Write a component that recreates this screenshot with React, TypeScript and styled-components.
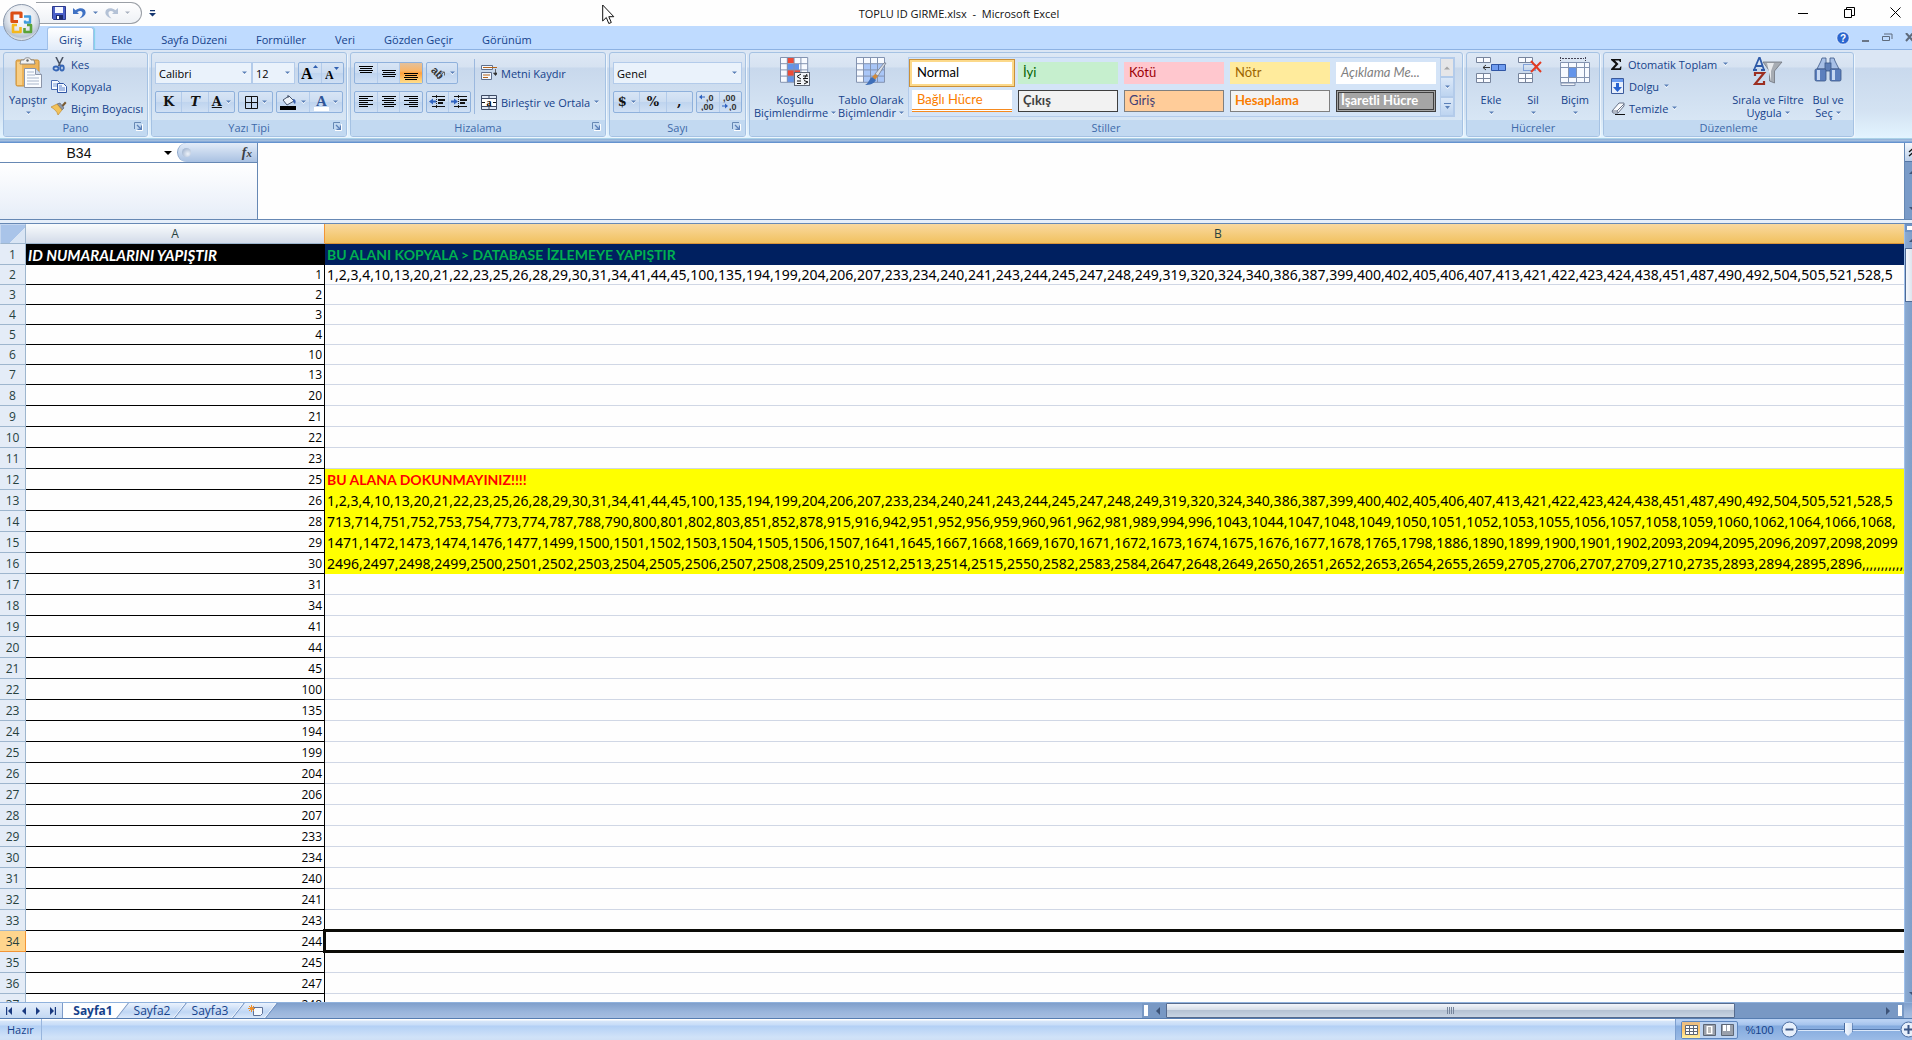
import React from "react";
import styled, { createGlobalStyle, css } from "styled-components";

const ui = `"Open Sans", "Noto Sans", sans-serif`;
const calibri = `Lato, "Open Sans", sans-serif`;
const ink = "#15428b";

const GlobalStyle = createGlobalStyle`
  *, *::before, *::after { box-sizing: border-box; }
  html, body, #root { height: 100%; }
  body { margin: 0; overflow: hidden; font-family: ${ui}; font-size: 11px; color: ${ink}; }
  button, input, select, textarea { font: inherit; color: inherit; margin: 0; padding: 0; border: 0; background: none; border-radius: 0; outline: none; }
  svg { display: block; flex: none; }
`;

const Viewport = styled.div`
  position: relative;
  height: 100vh;
  overflow: hidden;
`;

/* The maximised window runs a little past the right screen edge. */
const Shell = styled.div`
  width: calc(100% + 8px);
  height: 100%;
  display: flex;
  flex-direction: column;
  background: #fefefe;
`;

/* ---------- title bar ---------- */

const TitleBar = styled.header`
  flex: none;
  height: 26px;
  display: grid;
  grid-template-columns: 1fr auto 1fr;
  align-items: start;
  padding-right: 2px;
`;

const QuickAccess = styled.div`
  display: flex;
  align-items: center;
  gap: 7px;
  padding: 2px 0 0 36px;
`;

const QuickPill = styled.div`
  display: flex;
  align-items: center;
  width: 106px;
  height: 22px;
  padding: 0 10px 0 16px;
  gap: 7px;
  border: 1px solid #9a9fa6;
  border-left: 0;
  border-radius: 0 11px 11px 0;
  background: linear-gradient(#ffffff, #eef1f5);
`;

const IconButton = styled.button`
  display: flex;
  align-items: center;
  justify-content: center;
`;

const Title = styled.h1`
  margin: 0;
  font: 400 11px/28px ${ui};
  color: #111;
  white-space: pre;
`;

const Caption = styled.div`
  display: flex;
  justify-content: flex-end;
`;

const CaptionButton = styled(IconButton)`
  width: 46px;
  height: 25px;
`;

const Orb = styled.button`
  position: absolute;
  left: 2px;
  top: 3px;
  z-index: 2;
`;

const Pointer = styled.div`
  position: absolute;
  left: 602px;
  top: 4px;
  z-index: 3;
  pointer-events: none;
`;

/* ---------- ribbon ---------- */

const TabBar = styled.nav`
  flex: none;
  display: flex;
  align-items: flex-end;
  height: 24px;
  padding: 0 5px 0 47px;
  background: #bfdbff;
  border-bottom: 1px solid #8db2e3;
`;

const RibbonTab = styled.button<{ $active?: boolean }>`
  height: 23px;
  padding: 0 11px;
  margin: 0 5px -1px 0;
  line-height: 24px;
  border: 1px solid transparent;
  border-bottom: 0;
  ${(p) =>
    p.$active &&
    css`
      background: linear-gradient(#ffffff, #e1ebf8);
      border-color: #9fc0ea;
      border-radius: 3px 3px 0 0;
      box-shadow: 1px 0 1px #7fd3e8;
    `}
`;

const DocButtons = styled.div`
  margin-left: auto;
  align-self: center;
  display: flex;
  align-items: center;
  gap: 11px;
`;

const Ribbon = styled.div`
  flex: none;
  display: flex;
  gap: 3px;
  height: 93px;
  padding: 2px 3px 6px;
  background: linear-gradient(#dbe6f4 0, #dbe6f4 17px, #c9d9ed 18px, #d3e2f2 60px, #e3f4ff 88px, #c5f3f7 88px, #8fb0d8 89px, #a9c2e0 91px, #6593cf 92px);
`;

const Group = styled.section<{ $w: number }>`
  flex: none;
  width: ${(p) => p.$w}px;
  display: flex;
  flex-direction: column;
  border: 1px solid #a5c2e3;
  border-radius: 3px;
  overflow: hidden;
  background: linear-gradient(#dde8f5 0, #d6e2f1 14px, #c8d8ec 15px, #dceaf7 100%);
  box-shadow: 1px 1px 0 #eef6fd;
`;

const GroupBody = styled.div`
  flex: 1;
  display: flex;
  padding: 0 3px;
`;

const GroupLabel = styled.div`
  position: relative;
  height: 16px;
  line-height: 16px;
  text-align: center;
  color: #3e6aaa;
  background: #c2d9f1;
`;

const Launcher = styled.button`
  position: absolute;
  right: 4px;
  top: 2px;
`;

const Stack = styled.div<{ $ml?: number }>`
  display: flex;
  flex-direction: column;
  margin-left: ${(p) => p.$ml ?? 0}px;
`;

const Tools = styled.div`
  display: flex;
  flex-direction: column;
  gap: 7px;
  padding-top: 9px;
`;

const ToolRow = styled.div`
  display: flex;
  gap: 3px;
  height: 22px;
`;

const ComboPair = styled.div`
  display: flex;
`;

const SmallButton = styled.button<{ $gap?: number }>`
  display: flex;
  align-items: center;
  gap: ${(p) => p.$gap ?? 4}px;
  height: 22px;
  white-space: nowrap;
`;

const BigButton = styled.button<{ $w: number }>`
  width: ${(p) => p.$w}px;
  height: 66px;
  display: flex;
  flex-direction: column;
  align-items: center;
  padding-top: 4px;
  line-height: 13px;
  white-space: nowrap;
`;

const BigIcon = styled.span`
  height: 36px;
`;

const Line = styled.span`
  display: flex;
  align-items: center;
  justify-content: center;
  gap: 3px;
  height: 13px;
`;

const ButtonSet = styled.div<{ $w?: number }>`
  display: flex;
  width: ${(p) => (p.$w ? `${p.$w}px` : "auto")};
  height: 22px;
  border: 1px solid #8fb1dc;
  border-radius: 2px;
  background: linear-gradient(#d8e5f5 0, #cbdcf1 50%, #bfd4ee 51%, #d0e0f4 100%);
`;

const Tool = styled.button<{ $on?: boolean }>`
  flex: 1;
  display: flex;
  align-items: center;
  justify-content: center;
  gap: 4px;
  font: 700 13px/20px "DejaVu Serif", serif;
  color: #111;
  & + & { border-left: 1px solid #b3cbea; }
  ${(p) => p.$on && css`background: linear-gradient(#e3c19c, #fbb566 40%, #ffa03c 50%, #ffdf8c);`}
`;

const Combo = styled.label<{ $w: number }>`
  display: flex;
  align-items: center;
  width: ${(p) => p.$w}px;
  height: 22px;
  padding-right: 4px;
  border: 1px solid #b3cbea;
  background: #eaf2fb;
  color: #000;
`;

const ComboSelect = styled.select`
  appearance: none;
  flex: 1;
  min-width: 0;
  padding-left: 3px;
`;

const Rule = styled.span`
  width: 1px;
  height: 55px;
  margin: 6px 6px 0 3px;
  background: #9bb8de;
`;

const Gallery = styled.div`
  display: flex;
  height: 60px;
  margin: 4px 0 0 3px;
  border: 1px solid #b3cbea;
  background: #d4e4f7;
`;

const Styles = styled.div`
  display: grid;
  grid-template-columns: repeat(5, 100px);
  grid-auto-rows: 22px;
  gap: 6px;
  padding: 4px 4px 4px 3px;
`;

type Look = { $bg: string; $fg: string; $edge?: string; $bold?: boolean; $italic?: boolean; $double?: boolean; $picked?: boolean; $linked?: boolean };

const StyleItem = styled.button<Look>`
  display: flex;
  align-items: center;
  padding: 0 0 2px 4px;
  font: ${(p) => (p.$italic ? "italic" : "normal")} ${(p) => (p.$bold ? 700 : 400)} 13px/16px ${calibri};
  color: ${(p) => p.$fg};
  background: ${(p) => p.$bg};
  border: ${(p) => (p.$double ? "3px double" : "1px solid")} ${(p) => p.$edge ?? "transparent"};
  ${(p) => p.$double && "padding-left: 2px; background-clip: border-box;"}
  ${(p) => p.$linked && "border: 0; padding-left: 5px; border-bottom: 3px double #f58a1f;"}
  ${(p) => p.$picked && "box-shadow: 0 0 0 2px #fcd98a, 0 0 0 3px #c9903a;"}
`;

const GalleryScroll = styled.div`
  display: flex;
  flex-direction: column;
  width: 14px;
`;

const GalleryButton = styled(IconButton)<{ $off?: boolean }>`
  flex: 1;
  border: 1px solid #b3cbea;
  background: ${(p) => (p.$off ? "#e6e6e8" : "linear-gradient(#dbe8f8, #bdd4f0)")};
`;

/* ---------- formula bar ---------- */

const FormulaBar = styled.div`
  flex: none;
  display: flex;
  height: 77px;
  border-bottom: 1px solid #6688b4;
`;

const NamePane = styled.div`
  width: 258px;
  border-right: 1px solid #6688b4;
  background: linear-gradient(#ffffff 20px, #e6edf8);
`;

const NameRow = styled.div`
  display: flex;
  height: 20px;
  border-bottom: 1px solid #6688b4;
  background: #fff;
`;

const NameInput = styled.input`
  width: 158px;
  text-align: center;
  font: 14px/18px "Liberation Sans", Arial, sans-serif;
  color: #111;
`;

const NameArrow = styled(IconButton)`
  width: 19px;
`;

const FxPill = styled.div`
  flex: 1;
  display: flex;
  align-items: center;
  justify-content: space-between;
  padding: 0 5px 0 4px;
  border-left: 1px solid #8fa9cc;
  border-radius: 10px 0 0 10px;
  background: linear-gradient(#e3ecf8, #a9c1e2);
`;

const Dot = styled.i`
  width: 9px;
  height: 9px;
  border-radius: 50%;
  background: radial-gradient(circle at 65% 65%, #eef3fa, #8ea4c4);
`;

const Fx = styled.button`
  display: flex;
  align-items: baseline;
  font: italic 700 14px/18px "Liberation Serif", serif;
  color: #3c3f46;
  small { font-size: 11px; }
`;

const FormulaText = styled.textarea`
  flex: 1;
  min-width: 0;
  resize: none;
  background: #fefefe;
`;

const FormulaSide = styled.div`
  width: 16px;
  display: flex;
  flex-direction: column;
  align-items: center;
  gap: 6px;
  padding-bottom: 6px;
  border-left: 1px solid #6688b4;
  background: #7a9bc8;
`;

const Expand = styled(IconButton)`
  width: 100%;
  height: 19px;
  background: linear-gradient(#f4f8fd, #bcd0ea);
  border-bottom: 1px solid #5576a6;
`;

const Splitter = styled.div`
  flex: none;
  height: 4px;
  background: #e6effa;
  border-bottom: 1px solid #6688b4;
`;

/* ---------- worksheet ---------- */

const SheetArea = styled.main`
  flex: 1;
  min-height: 0;
  display: flex;
`;

const SheetClip = styled.div`
  flex: 1;
  min-width: 0;
  overflow: hidden;
`;

/* Column B continues behind the vertical scroll bar. */
const Grid = styled.table`
  width: calc(100% + 208px);
  table-layout: fixed;
  border-collapse: separate;
  border-spacing: 0;
  td, th { padding: 0; white-space: nowrap; overflow: hidden; vertical-align: bottom; }
`;

const Corner = styled.th`
  width: 26px;
  background: linear-gradient(135deg, #a9c4e9 62%, #d9e5f4 63%);
  border: 1px solid #9eb6ce;
  border-top-color: #c5d7f0;
  border-left-color: #c5d7f0;
`;

const ColHead = styled.th<{ $on?: boolean; $w?: number }>`
  width: ${(p) => (p.$w ? `${p.$w}px` : "auto")};
  height: 20px;
  font: 400 12px/18px ${ui};
  color: #27413e;
  background: ${(p) => (p.$on ? "linear-gradient(#f9d99f, #f1c15f)" : "linear-gradient(#f9fcfd, #d3dbe9)")};
  border-bottom: 1px solid ${(p) => (p.$on ? "#d9963a" : "#9eb6ce")};
  border-right: 1px solid ${(p) => (p.$on ? "#9eb6ce" : "#f29536")};
`;

const Row = styled.tr<{ $h: number }>`
  height: ${(p) => p.$h}px;
`;

const RowHead = styled.th<{ $on?: boolean }>`
  font: 400 12px/18px ${ui};
  color: #27413e;
  background: ${(p) => (p.$on ? "#ffd58d" : "#e4ecf7")};
  border-right: 1px solid ${(p) => (p.$on ? "#f29536" : "#9eb6ce")};
  border-bottom: 1px solid ${(p) => (p.$on ? "#f29536" : "#9eb6ce")};
`;

const IdCell = styled.td<{ $head?: boolean }>`
  font: 400 12px/18px ${ui};
  color: #000;
  text-align: right;
  border-right: 1px solid #000;
  border-bottom: 1px solid #000;
  && { padding-right: 2px; }
  ${(p) =>
    p.$head &&
    css`
      font: italic 700 15px/18px ${calibri};
      color: #fff;
      background: #000;
      text-align: left;
      && { padding-left: 2px; }
    `}
`;

const WideCell = styled.td<{ $tone?: "head" | "note" | "warn"; $sel?: boolean }>`
  font: 400 14px/18px "Noto Sans", sans-serif;
  color: #000;
  border-bottom: 1px solid #d0d7e5;
  && { padding-left: 2px; }
  ${(p) => p.$tone === "head" && css`font: 700 14px/18px ${calibri}; color: #00b050; background: #002060; border-color: #002060;`}
  ${(p) => p.$tone === "note" && "background: #ffff00; border-color: #ffff00;"}
  ${(p) => p.$tone === "warn" && css`font: 700 14px/18px ${calibri}; color: #ff0000; background: #ffff00; border-color: #ffff00;`}
  ${(p) => p.$sel && "position: relative; && { overflow: visible; }"}
`;

const Selection = styled.div`
  position: absolute;
  inset: -2px -4px -2px -2px;
  border: 3px solid #0c0c08;
`;

const VScroll = styled.div`
  width: 16px;
  display: flex;
  flex-direction: column;
  border-left: 1px solid #9fc0ea;
  background: linear-gradient(90deg, #8aaad2, #7191c0);
`;

const VSplit = styled.div`
  height: 8px;
  border: 2px solid #6f93c4;
  background: #fff;
`;

const ScrollArrow = styled(IconButton)`
  width: 16px;
  height: 16px;
`;

const VThumb = styled.div`
  height: 54px;
  border: 1px solid #4f6b96;
  background: linear-gradient(90deg, #f5f8fc, #c0cddd);
`;

const Grow = styled.div`
  flex: 1;
`;

/* ---------- sheet tabs ---------- */

const SheetBar = styled.div`
  flex: none;
  display: flex;
  height: 16px;
  border-top: 1px solid #8fb1dc;
  background: linear-gradient(#7f9fcb, #9bb6dc 60%, #a5bde0);
`;

const SheetNav = styled.div`
  display: flex;
  width: 63px;
  padding: 0 2px;
  border-right: 1px solid #7d9bc9;
  background: linear-gradient(#e4eefb, #c3d8f3);
`;

const NavButton = styled(IconButton)`
  flex: 1;
`;

const SheetTab = styled.button<{ $w: number; $active?: boolean }>`
  position: relative;
  width: ${(p) => p.$w}px;
  height: 15px;
  display: flex;
  align-items: center;
  justify-content: center;
  font: ${(p) => (p.$active ? 700 : 400)} 12px/15px ${ui};
  z-index: ${(p) => (p.$active ? 1 : 0)};
  &::before {
    content: "";
    position: absolute;
    inset: 0;
    z-index: -1;
    transform: skewX(-38deg);
    border-right: 1px solid #6f8fc0;
    box-shadow: inset -1px 0 0 #fff;
    background: ${(p) => (p.$active ? "#fdfeff" : "linear-gradient(#eaf2fd, #bfd6f4 60%, #dbe8fa)")};
  }
`;

const Tabs = styled.div`
  display: flex;
  isolation: isolate;
  overflow: hidden;
  padding-right: 8px;
  background: linear-gradient(90deg, #fdfeff 20px, transparent 20px);
`;

const HScroll = styled.div`
  width: 39.7%;
  margin-left: auto;
  margin-right: 16px;
  display: flex;
  background: #7898c4;
`;

const HSplit = styled.div`
  width: 8px;
  border: 2px solid #7898c4;
  background: #fff;
`;

const HThumb = styled.div`
  width: 74.7%;
  display: flex;
  justify-content: center;
  align-items: center;
  gap: 1px;
  border: 1px solid #566b8e;
  border-radius: 1px;
  background: linear-gradient(#f2f5fa, #d5dde8 45%, #b5c2d3 50%, #c9d5e4);
  i { width: 1px; height: 7px; background: #76859c; }
`;

/* ---------- status bar ---------- */

const StatusBar = styled.footer`
  flex: none;
  display: flex;
  height: 22px;
  border-top: 1px solid #567db1;
  line-height: 22px;
  color: ${ink};
  background: linear-gradient(#ffffff 1px, #d7e6f9 2px, #c7dcf8 6px, #b3d0f5 7px, #d0e2f8 18px, #cfe0f5);
`;

const Ready = styled.div`
  width: 42px;
  padding-left: 7px;
  border-right: 1px solid #98b5dd;
`;

const ViewZone = styled.div`
  margin-left: auto;
  width: 245px;
  display: flex;
  align-items: center;
  padding-left: 5px;
  border-left: 1px solid #7d9fcf;
  background: linear-gradient(#b8d1f3 2px, #a4c3ec 6px, #83aade 7px, #9bbbe6);
`;

const Views = styled.div`
  display: flex;
  width: 57px;
  height: 18px;
  border: 1px solid #5d85bd;
  border-radius: 2px;
  background: #bdd3f1;
`;

const ViewButton = styled(IconButton)<{ $on?: boolean }>`
  flex: 1;
  ${(p) => p.$on && "background: linear-gradient(#e9bd86, #ffc66b 50%, #fff0a0);"}
`;

const ZoomLabel = styled.button`
  width: 43px;
  font-family: "Liberation Sans", Arial, sans-serif;
`;

const ZoomRange = styled.input`
  appearance: none;
  width: 102px;
  height: 16px;
  background: linear-gradient(transparent 7px, #5378ad 7px, #5378ad 8px, #dbe8fa 8px, #dbe8fa 9px, transparent 9px);
  &::-webkit-slider-thumb {
    appearance: none;
    width: 9px;
    height: 13px;
    background: linear-gradient(90deg, #4a6ca0 1px, #f2f7fe 1px, #d5e3f6 8px, #4a6ca0 8px);
    clip-path: polygon(0 0, 100% 0, 100% 65%, 50% 100%, 0 65%);
  }
`;

/* ---------- icons ---------- */

const Down = ({ c = "#5b80b8" }: { c?: string }) => (
  <svg width="5" height="4" viewBox="0 0 5 4"><path d="M0 1.400h5L2.500 4z" fill="#fff" /><path d="M0 .400h5L2.500 3z" fill={c} /></svg>
);
const Tri = ({ d, c = "#3d5377", s = 8 }: { d: "l" | "r" | "u" | "d"; c?: string; s?: number }) => {
  const p = { l: "M6 0v8L2 4z", r: "M2 0v8l4-4z", u: "M0 6h8L4 2z", d: "M0 2h8L4 6z" }[d];
  return <svg width={s} height={s} viewBox="0 0 8 8"><path d={p} fill={c} /></svg>;
};
const Logo = () => (
  <svg width="39" height="39" viewBox="0 0 39 39">
    <defs>
      <radialGradient id="orb" cx="50%" cy="35%" r="65%"><stop offset="0" stopColor="#fff" /><stop offset=".55" stopColor="#e6eaf0" /><stop offset=".85" stopColor="#b8c4d4" /><stop offset="1" stopColor="#eef2f7" /></radialGradient>
    </defs>
    <circle cx="19.500" cy="19.500" r="18" fill="url(#orb)" stroke="#8b98ab" />
    <g fill="none" strokeLinejoin="round">
      <path d="M16 18.500H10V10h9v5" stroke="#dc4f14" strokeWidth="3.200" />
      <path d="M22 13.500h6v6h-5v-2" stroke="#3f9bdc" strokeWidth="2.400" />
      <path d="M15 22h-4v7h7.500v-5" stroke="#f5b81d" strokeWidth="2.600" />
      <path d="M22.500 25v4h6.500v-7h-4" stroke="#5aa337" strokeWidth="2.600" />
    </g>
  </svg>
);
const Save = () => (
  <svg width="14" height="14" viewBox="0 0 14 14"><path d="M.5.5h13v13h-12l-1-1z" fill="#4a5fc8" stroke="#2c3a8c" /><path d="M3 1h8v6H3z" fill="#f4f7ff" /><path d="M4 9h7v4.500H4z" fill="#1c2a6b" /><path d="M5 10h2v3H5z" fill="#fff" /></svg>
);
const Undo = ({ c, flip }: { c: string; flip?: boolean }) => (
  <svg width="13" height="12" viewBox="0 0 13 12"><g transform={flip ? "matrix(-1 0 0 1 13 0)" : undefined}><path d="M0 1v6h6L4.200 5.200C7 3 9.800 4 9.500 6.500 9.300 8.500 8 10 6.500 11.500 10 10.500 13 8 12.600 5 12 1 7 0 2.600 3.200z" fill={c} /></g></svg>
);
const More = () => (
  <svg width="7" height="7" viewBox="0 0 7 7"><path d="M1 0h5v1.200H1zM0 3h7L3.500 6.500z" fill="#15366f" /></svg>
);
const GalleryMore = () => (
  <svg width="7" height="7" viewBox="0 0 7 7"><path d="M0 0h7v1H0zM1 3h5L3.500 6z" fill="#5b80b8" /></svg>
);
const LaunchIcon = () => (
  <svg width="9" height="9" viewBox="0 0 9 9"><path d="M.5 7V.5H7" fill="none" stroke="#6688b4" /><path d="M3 3l4 4M7.500 3.500v4h-4" fill="none" stroke="#5b80b8" strokeWidth="1.300" /><path d="M8.500 2v6.500H2" fill="none" stroke="#fff" /></svg>
);
const Paste = () => (
  <svg width="27" height="32" viewBox="0 0 27 32"><rect x="1" y="3" width="23" height="26" rx="1.500" fill="#eeb45a" stroke="#c98f35" /><path d="M2 5h5v23H2z" fill="#f8ce85" /><path d="M6 3h3c0-3 7-3 7 0h3l1 4H5z" fill="#f2f2f2" stroke="#777" strokeWidth=".8" /><circle cx="12.500" cy="3.500" r="1.200" fill="#666" /><path d="M9.500 11.500h11l6 6v13h-17z" fill="#fafcff" stroke="#8b95a8" /><path d="M20.500 11.500v6h6" fill="#cfdaea" stroke="#8b95a8" /><path d="M12 15h7M12 18h8M12 21h12M12 24h12M12 27h12" stroke="#a9b6cb" /></svg>
);
const Cut = () => (
  <svg width="16" height="15" viewBox="0 0 16 15"><path d="M5 0l4.500 9M12 0L7.500 9" stroke="#4b5566" strokeWidth="1.600" /><ellipse cx="5" cy="11.500" rx="2.500" ry="2" fill="none" stroke="#3565b5" strokeWidth="1.800" /><ellipse cx="11" cy="11" rx="1.800" ry="2.500" fill="none" stroke="#3565b5" strokeWidth="1.800" /></svg>
);
const Copy = () => (
  <svg width="16" height="13" viewBox="0 0 16 13"><path d="M.5.5h6l2 2v7h-8z" fill="#f5f9ff" stroke="#4a6db3" /><path d="M2 4h4M2 6h5" stroke="#7b9bd6" /><path d="M6.500 3.500h6l3 3v6h-9z" fill="#f5f9ff" stroke="#2f55a4" /><path d="M8 6h3M8 8h6M8 10h6" stroke="#5c82cc" /></svg>
);
const Brush = () => (
  <svg width="16" height="14" viewBox="0 0 16 14"><path d="M10 5l4-4.500 1.500 1.500L12 6z" fill="#7a5a2f" /><path d="M6 3l3-1 4 5-2 2z" fill="#8e97a6" stroke="#555e6c" strokeWidth=".6" /><path d="M0 6l6-3 5 6-4 5C6 10 3 8 0 6z" fill="#f2c25a" stroke="#b98328" strokeWidth=".6" /></svg>
);
const Borders = () => (
  <svg width="13" height="13" viewBox="0 0 13 13"><path d="M.5.5h12v12H.5zM6.500 0v13M0 6.500h13" fill="none" stroke="#111" /></svg>
);
const Bucket = () => (
  <svg width="17" height="16" viewBox="0 0 17 16"><path d="M3 6l6-4 5 5-7 4z" fill="#eef3fa" stroke="#47546b" /><path d="M8 4V1" stroke="#47546b" /><path d="M13 5c3 0 3 3 2 5-2-1-2-3-2-5z" fill="#3a62b0" /><path d="M0 12h16v4H0z" fill="#000" /></svg>
);
const Orient = () => (
  <svg width="16" height="16" viewBox="0 0 16 16"><text x="0" y="9" fontSize="11" fontWeight="700" fontFamily="Liberation Sans" fill="#333" transform="rotate(45 4 8)">ab</text><path d="M7 14l7-7M11 7h3.500v3.500" stroke="#666" fill="none" /></svg>
);
const Bars = ({ rows }: { rows: [number, number, number][] }) => (
  <svg width="14" height="14" viewBox="0 0 14 14">{rows.map(([x, y, w]) => <rect key={y} x={x} y={y} width={w} height="1" fill="#000" />)}</svg>
);
const Indent = ({ out }: { out?: boolean }) => (
  <svg width="17" height="14" viewBox="0 0 17 14"><path d="M7.500 0v14" stroke="#222" strokeDasharray="1 1" /><path d="M3 1h13v1H3zM9 4h7v2H9zM9 7h5v2H9zM3 11h13v1H3z" fill="#111" /><path d={out ? "M0 6.500l4-3v2h3v2H4v2z" : "M7 6.500l-4-3v2H0v2h3v2z"} fill="#2f62c0" /></svg>
);
const Wrap = () => (
  <svg width="16" height="16" viewBox="0 0 16 16"><path d="M.5.5h11v4H.5z" fill="#f5f9ff" stroke="#5f6f8c" /><path d="M2 2.500h14" stroke="#b5651d" /><path d="M.5 7.500h10v7H.5z" fill="#f5f9ff" stroke="#5f6f8c" /><path d="M2 10h7M2 12.500h5" stroke="#b5651d" /><path d="M14.500 4v5M12.500 8h4l-2 2.500z" stroke="#333" fill="#333" strokeWidth=".7" /></svg>
);
const Merge = () => (
  <svg width="16" height="15" viewBox="0 0 16 15"><path d="M.5.5h15v14H.5z" fill="#dfe9f7" stroke="#3d4a63" /><path d="M0 3.500h16M0 11.500h16M8 0v3M8 12v3" stroke="#3d4a63" /><path d="M1 4h14v7H1z" fill="#fff" /><text x="8" y="10.500" textAnchor="middle" fontSize="10" fontWeight="700" fontFamily="Liberation Serif">a</text><path d="M1 7.500h3M15 7.500h-3" stroke="#111" /></svg>
);
const Decimal = ({ up }: { up?: boolean }) => (
  <svg width="18" height="18" viewBox="0 0 18 18"><g fontSize="9" fontWeight="700" fontFamily="Liberation Sans" fill="#333"><text x={up ? 7 : 2} y="8">{up ? ",0" : ",00"}</text><text x={up ? 2 : 8} y="17">{up ? ",00" : ",0"}</text></g><path d={up ? "M0 4l3-2.500v2h3v1H3v2z" : "M7 13l-3-2.500v2H1v1h3v2z"} fill="#2f62c0" /></svg>
);
const grid = (x: number, y: number, cols: number, rows: number, w: number, h: number) => {
  let d = "";
  for (let i = 0; i <= cols; i++) d += `M${x + i * w} ${y}v${rows * h}`;
  for (let j = 0; j <= rows; j++) d += `M${x} ${y + j * h}h${cols * w}`;
  return d;
};
const Conditional = () => (
  <svg width="30" height="30" viewBox="0 0 30 30"><path d="M.5.5h27v25H.5z" fill="#f7faff" /><path d="M7 0h7v6H7zM7 13h13v6H7z" fill="#ee4b37" /><path d="M7 7h12v6H7zM7 19h7v6H7z" fill="#6394ea" /><path d={grid(0.5, 0.5, 4, 4, 6.8, 6.2)} stroke="#8393b0" fill="none" /><rect x="14.500" y="15.500" width="15" height="13" fill="#f2f5f9" stroke="#5d6675" /><path d="M21 17l-4 2.500 4 2.500M17 24h4M17 26.500h4M23 19h5M23 21.500h5M27 17l-3 5.500M24 23.500l4 1.500-4 2" stroke="#111" fill="none" /></svg>
);
const TableFmt = () => (
  <svg width="31" height="30" viewBox="0 0 31 30"><path d="M.5.5h28v25H.5z" fill="#f7faff" /><path d="M7.500 6.700h21v18.800h-21z" fill="#a9c6f7" /><path d={grid(0.5, 0.5, 4, 4, 7, 6.2)} stroke="#8393b0" fill="none" /><path d="M30 6l-8 13-3-2L28 6z" fill="#d9dee6" stroke="#6a7384" strokeWidth=".7" /><path d="M22 19l-3-2-3 3 3 3z" fill="#d08a3c" /><path d="M16 20l4 3c-2 4-6 5-11 5 4-2 4-6 7-8z" fill="#3f6fb8" /></svg>
);
const CellsIcon = ({ kind }: { kind: "add" | "del" | "fmt" }) =>
  kind === "fmt" ? (
    <svg width="30" height="30" viewBox="0 0 30 30"><path d="M.5 0v4M25.500 0v4M2 1.500h22" stroke="#445" strokeDasharray="2 1" /><path d="M.5 5.500h29v20H.5z" fill="#f7faff" /><path d="M8.500 10h8v11h-8z" fill="#6394ea" /><path d="M.5 5.500h29v20H.5zM8.500 5v21M16.500 5v21M24.500 5v21M0 10.500h30M0 20.500h30" stroke="#8393b0" fill="none" /><path d="M1 26h14v2.500H1z" fill="#f0f3f8" stroke="#8393b0" /></svg>
  ) : (
    <svg width="31" height="28" viewBox="0 0 31 28"><g fill="#f9fbff" stroke="#77849c"><path d="M.5.5h14v5H.5zM7.500.500v5" /><path d="M.5 16.500h14v9H.5zM7.500 16v10M0 21.500h15" /></g>{kind === "add" ? <><path d="M15.500 7.500h14v6h-14z" fill="#6f9cf0" stroke="#2f55a4" /><path d="M22.500 7v7" stroke="#2f55a4" /><path d="M14 10.500H7M10 8l-3 2.500 3 2.500" stroke="#333" fill="none" /></> : <><path d="M5.500 7.500h12v6h-12z" fill="none" stroke="#2f62c0" strokeDasharray="1 1" /><path d="M13 4l10 11M23 5L13 15" stroke="#e33b22" strokeWidth="2" /></>}</svg>
  );
const Sigma = () => (
  <svg width="11" height="11" viewBox="0 0 11 11"><path d="M0 0h10v3H9L8 1.500H4L7.500 5 3.500 9.200h5L9.500 7.500h1L10 11H0v-1l4.500-5L0 1z" fill="#111" /></svg>
);
const Fill = () => (
  <svg width="13" height="16" viewBox="0 0 13 16"><path d="M.5.5h12v15H.5z" fill="#e6eefb" stroke="#3a5a9c" /><path d="M1 1h11v3H1z" fill="#6b9cf0" /><path d="M5 5h3v4h3l-4.500 5L2 9h3z" fill="#2763d0" /></svg>
);
const Eraser = () => (
  <svg width="14" height="13" viewBox="0 0 14 13"><path d="M1 9l7-8h5v3l-6 7H2z" fill="#fafbfd" stroke="#69748a" /><path d="M1 9h5l7-7M6 9l1 2" stroke="#69748a" fill="none" /><path d="M4 12.500h10" stroke="#111" /></svg>
);
const SortIcon = () => (
  <svg width="30" height="32" viewBox="0 0 30 32">
    <path d="M1 13L6.500 0 11 13M3 9h6M0 13h4M8 13h4" fill="none" stroke="#2e5aa8" strokeWidth="1.800" />
    <path d="M2 19v-3h9L2 27h9v-3" fill="none" stroke="#9c2f22" strokeWidth="2.200" />
    <path d="M10 5h19l-7.500 9v12l-5-2V14z" fill="#a7acb3" stroke="#70757d" strokeWidth=".8" />
    <path d="M14 6h7l-3 8v10z" fill="#e6e8eb" />
  </svg>
);
const Binoculars = () => (
  <svg width="28" height="26" viewBox="0 0 28 26"><g stroke="#3b5787" strokeWidth=".8"><path d="M7 4l1-3h4v4l1 7H3z" fill="#a8c0e6" /><path d="M21 4l-1-3h-4v4l-1 7h10z" fill="#a8c0e6" /><rect x="11" y="6" width="6" height="8" fill="#5f7fb6" /><rect x="1" y="12" width="11" height="12" rx="1.500" fill="#5c7fbd" /><rect x="16" y="12" width="11" height="12" rx="1.500" fill="#5c7fbd" /></g><path d="M3 13h3v10H3zM18 13h3v10h-3z" fill="#c7d8f2" /></svg>
);
const Help = () => (
  <svg width="14" height="14" viewBox="0 0 14 14"><circle cx="7" cy="7" r="6.300" fill="#2b66cf" stroke="#e8f1ff" /><text x="7" y="10.500" textAnchor="middle" fontSize="10" fontWeight="700" fontFamily="Liberation Sans" fill="#fff">?</text></svg>
);
const ZoomCircle = ({ plus }: { plus?: boolean }) => (
  <svg width="17" height="17" viewBox="0 0 17 17"><circle cx="8.500" cy="8.500" r="7.500" fill="#e6effb" stroke="#4a6ca0" /><path d={plus ? "M4 8.500h9M8.500 4v9" : "M4.500 8.500h8"} stroke="#3b5787" strokeWidth="2" /></svg>
);
const Nav = ({ flip, bar }: { flip?: boolean; bar?: boolean }) => (
  <svg width="7" height="8" viewBox="0 0 7 8"><g transform={flip ? "matrix(-1 0 0 1 7 0)" : undefined} fill="#1a3a80"><path d="M6 0v8L2 4z" />{bar && <path d="M0 0h1.200v8H0z" />}</g></svg>
);

/* ---------- data ---------- */

const first =
  "1,2,3,4,10,13,20,21,22,23,25,26,28,29,30,31,34,41,44,45,100,135,194,199,204,206,207,233,234,240,241,243,244,245,247,248,249,319,320,324,340,386,387,399,400,402,405,406,407,413,421,422,423,424,438,451,487,490,492,504,505,521,528,5";
const ids = "1 2 3 4 10 13 20 21 22 23 25 26 28 29 30 31 34 41 44 45 100 135 194 199 204 206 207 233 234 240 241 243 244 245 247 248".split(" ");
const wide: Record<number, { text: string; tone?: "note" | "warn" }> = {
  2: { text: first },
  12: { text: "BU ALANA DOKUNMAYINIZ!!!!", tone: "warn" },
  13: { text: first, tone: "note" },
  14: { tone: "note", text: "713,714,751,752,753,754,773,774,787,788,790,800,801,802,803,851,852,878,915,916,942,951,952,956,959,960,961,962,981,989,994,996,1043,1044,1047,1048,1049,1050,1051,1052,1053,1055,1056,1057,1058,1059,1060,1062,1064,1066,1068," },
  15: { tone: "note", text: "1471,1472,1473,1474,1476,1477,1499,1500,1501,1502,1503,1504,1505,1506,1507,1641,1645,1667,1668,1669,1670,1671,1672,1673,1674,1675,1676,1677,1678,1765,1798,1886,1890,1899,1900,1901,1902,2093,2094,2095,2096,2097,2098,2099" },
  16: { tone: "note", text: "2496,2497,2498,2499,2500,2501,2502,2503,2504,2505,2506,2507,2508,2509,2510,2512,2513,2514,2515,2550,2582,2583,2584,2647,2648,2649,2650,2651,2652,2653,2654,2655,2659,2705,2706,2707,2709,2710,2735,2893,2894,2895,2896,,,,,,,,,,,," },
};

const styleItems: (Look & { name: string })[] = [
  { name: "Normal", $bg: "#fff", $fg: "#000", $picked: true },
  { name: "İyi", $bg: "#c6efce", $fg: "#006100" },
  { name: "Kötü", $bg: "#ffc7ce", $fg: "#9c0006" },
  { name: "Nötr", $bg: "#ffeb9c", $fg: "#9c6500" },
  { name: "Açıklama Me...", $bg: "#fff", $fg: "#7f7f7f", $italic: true },
  { name: "Bağlı Hücre", $bg: "#fff", $fg: "#fa7d00", $linked: true },
  { name: "Çıkış", $bg: "#f2f2f2", $fg: "#3f3f3f", $edge: "#3f3f3f", $bold: true },
  { name: "Giriş", $bg: "#ffcc99", $fg: "#3f3f76", $edge: "#7f7f7f" },
  { name: "Hesaplama", $bg: "#f2f2f2", $fg: "#fa7d00", $edge: "#7f7f7f", $bold: true },
  { name: "İşaretli Hücre", $bg: "#a5a5a5", $fg: "#fff", $edge: "#3f3f3f", $bold: true, $double: true },
];

const left: [number, number, number][] = [[0, 1, 14], [0, 3, 9], [0, 5, 14], [0, 7, 9], [0, 9, 14], [0, 11, 9]];
const centre: [number, number, number][] = [[0, 1, 14], [2, 3, 10], [0, 5, 14], [2, 7, 10], [0, 9, 14], [2, 11, 10]];
const right: [number, number, number][] = [[0, 1, 14], [5, 3, 9], [0, 5, 14], [5, 7, 9], [0, 9, 14], [5, 11, 9]];
const at = (y: number): [number, number, number][] => [[0, y, 14], [1, y + 2, 12], [0, y + 4, 14], [1, y + 6, 12]];

const RibbonGroup = ({ w, label, launch, children }: { w: number; label: string; launch?: boolean; children: React.ReactNode }) => (
  <Group $w={w} aria-label={label}>
    <GroupBody>{children}</GroupBody>
    <GroupLabel>
      {label}
      {launch && <Launcher aria-label={`${label} seçenekleri`}><LaunchIcon /></Launcher>}
    </GroupLabel>
  </Group>
);

const Big = ({ w, icon, lines }: { w: number; icon: React.ReactNode; lines: string[] }) => (
  <BigButton $w={w}>
    <BigIcon>{icon}</BigIcon>
    <Line>{lines[0]}</Line>
    <Line>{lines[1]}<Down /></Line>
  </BigButton>
);

const Picker = ({ w, label, value }: { w: number; label: string; value: string }) => (
  <Combo $w={w}>
    <ComboSelect aria-label={label} defaultValue={value}><option>{value}</option></ComboSelect>
    <Down />
  </Combo>
);

export default function App() {
  return (
    <Viewport>
      <GlobalStyle />
      <Shell>
        <TitleBar>
          <QuickAccess>
            <QuickPill>
              <IconButton aria-label="Kaydet"><Save /></IconButton>
              <IconButton aria-label="Geri al"><Undo c="#3f72c4" /></IconButton>
              <Down />
              <IconButton aria-label="Yinele"><Undo c="#b4c2d6" flip /></IconButton>
              <Down c="#a9b2c0" />
            </QuickPill>
            <IconButton aria-label="Özelleştir"><More /></IconButton>
          </QuickAccess>
          <Title>{"TOPLU ID GIRME.xlsx  -  Microsoft Excel"}</Title>
          <Caption>
            <CaptionButton aria-label="Simge durumuna küçült"><svg width="11" height="11"><path d="M0 6.500h10" stroke="#000" /></svg></CaptionButton>
            <CaptionButton aria-label="Önceki boyut"><svg width="11" height="11"><path d="M.5 2.500h7v8h-7zM2.500 2V.5h8v8H8" fill="none" stroke="#000" /></svg></CaptionButton>
            <CaptionButton aria-label="Kapat"><svg width="11" height="11"><path d="M.5.5l10 10M10.500.5l-10 10" stroke="#000" /></svg></CaptionButton>
          </Caption>
        </TitleBar>

        <TabBar>
          <RibbonTab $active>Giriş</RibbonTab>
          {["Ekle", "Sayfa Düzeni", "Formüller", "Veri", "Gözden Geçir", "Görünüm"].map((t) => <RibbonTab key={t}>{t}</RibbonTab>)}
          <DocButtons>
            <IconButton aria-label="Yardım"><Help /></IconButton>
            <IconButton aria-label="Küçült"><svg width="10" height="9"><path d="M1 7h7v2H1z" fill="#6a7687" /></svg></IconButton>
            <IconButton aria-label="Geri yükle"><svg width="12" height="9"><path d="M2 1h8v5M.5 3.500h7v4h-7z" fill="none" stroke="#5f6b7c" /></svg></IconButton>
            <IconButton aria-label="Kitabı kapat"><svg width="10" height="9"><path d="M1 0l7 8M8 0L1 8" stroke="#5f6b7c" strokeWidth="2" /></svg></IconButton>
          </DocButtons>
        </TabBar>

        <Ribbon>
          <RibbonGroup w={145} label="Pano" launch>
            <Big w={42} icon={<Paste />} lines={["Yapıştır", ""]} />
            <Stack $ml={2}>
              <SmallButton><Cut />Kes</SmallButton>
              <SmallButton><Copy />Kopyala</SmallButton>
              <SmallButton><Brush />Biçim Boyacısı</SmallButton>
            </Stack>
          </RibbonGroup>

          <RibbonGroup w={196} label="Yazı Tipi" launch>
            <Tools>
              <ToolRow>
                <ComboPair>
                  <Picker w={97} label="Yazı tipi" value="Calibri" />
                  <Picker w={43} label="Yazı tipi boyutu" value="12" />
                </ComboPair>
                <ButtonSet $w={46}>
                  <Tool aria-label="Büyüt"><svg width="17" height="18"><text x="0" y="15" fontSize="16" fontFamily="Liberation Serif" fontWeight="700">A</text><path d="M12 4h5l-2.500-3z" fill="#2f5fb0" /></svg></Tool>
                  <Tool aria-label="Küçült"><svg width="15" height="18"><text x="0" y="15" fontSize="12" fontFamily="Liberation Serif" fontWeight="700">A</text><path d="M9 3h5l-2.500 3z" fill="#2f5fb0" /></svg></Tool>
                </ButtonSet>
              </ToolRow>
              <ToolRow>
                <ButtonSet $w={80}>
                  <Tool>K</Tool>
                  <Tool><em>T</em></Tool>
                  <Tool><u>A</u><Down /></Tool>
                </ButtonSet>
                <ButtonSet $w={35}><Tool aria-label="Kenarlıklar"><Borders /><Down /></Tool></ButtonSet>
                <ButtonSet $w={67}>
                  <Tool aria-label="Dolgu rengi"><Bucket /><Down /></Tool>
                  <Tool aria-label="Yazı rengi"><svg width="15" height="17"><text x="2" y="12" fontSize="15" fontFamily="Liberation Serif" fontWeight="700" fill="#2f5597">A</text><path d="M0 13h15v4H0z" fill="#fff" /></svg><Down /></Tool>
                </ButtonSet>
              </ToolRow>
            </Tools>
          </RibbonGroup>

          <RibbonGroup w={256} label="Hizalama" launch>
            <Tools>
              <ToolRow>
                <ButtonSet $w={69}>
                  <Tool aria-label="Üste hizala"><Bars rows={at(0)} /></Tool>
                  <Tool aria-label="Ortaya hizala"><Bars rows={at(4)} /></Tool>
                  <Tool $on aria-label="Alta hizala"><Bars rows={at(7)} /></Tool>
                </ButtonSet>
                <ButtonSet $w={32}><Tool aria-label="Yönlendirme"><Orient /><Down /></Tool></ButtonSet>
              </ToolRow>
              <ToolRow>
                <ButtonSet $w={69}>
                  <Tool aria-label="Sola hizala"><Bars rows={left} /></Tool>
                  <Tool aria-label="Ortala"><Bars rows={centre} /></Tool>
                  <Tool aria-label="Sağa hizala"><Bars rows={right} /></Tool>
                </ButtonSet>
                <ButtonSet $w={45}>
                  <Tool aria-label="Girintiyi azalt"><Indent out /></Tool>
                  <Tool aria-label="Girintiyi artır"><Indent /></Tool>
                </ButtonSet>
              </ToolRow>
            </Tools>
            <Rule />
            <Tools>
              <SmallButton><Wrap />Metni Kaydır</SmallButton>
              <SmallButton><Merge />Birleştir ve Ortala<Down /></SmallButton>
            </Tools>
          </RibbonGroup>

          <RibbonGroup w={137} label="Sayı" launch>
            <Tools>
              <ToolRow><Picker w={129} label="Sayı biçimi" value="Genel" /></ToolRow>
              <ToolRow>
                <ButtonSet $w={80}>
                  <Tool>$<Down /></Tool>
                  <Tool>%</Tool>
                  <Tool>,</Tool>
                </ButtonSet>
                <ButtonSet $w={46}>
                  <Tool aria-label="Ondalık artır"><Decimal up /></Tool>
                  <Tool aria-label="Ondalık azalt"><Decimal /></Tool>
                </ButtonSet>
              </ToolRow>
            </Tools>
          </RibbonGroup>

          <RibbonGroup w={714} label="Stiller">
            <Big w={84} icon={<Conditional />} lines={["Koşullu", "Biçimlendirme"]} />
            <Big w={68} icon={<TableFmt />} lines={["Tablo Olarak", "Biçimlendir"]} />
            <Gallery>
              <Styles>
                {styleItems.map(({ name, ...look }) => <StyleItem key={name} {...look}>{name}</StyleItem>)}
              </Styles>
              <GalleryScroll>
                <GalleryButton $off aria-label="Yukarı"><Tri d="u" c="#a5a5a5" s={6} /></GalleryButton>
                <GalleryButton aria-label="Aşağı"><Down /></GalleryButton>
                <GalleryButton aria-label="Diğer"><GalleryMore /></GalleryButton>
              </GalleryScroll>
            </Gallery>
          </RibbonGroup>

          <RibbonGroup w={134} label="Hücreler">
            <Big w={42} icon={<CellsIcon kind="add" />} lines={["Ekle", ""]} />
            <Big w={42} icon={<CellsIcon kind="del" />} lines={["Sil", ""]} />
            <Big w={42} icon={<CellsIcon kind="fmt" />} lines={["Biçim", ""]} />
          </RibbonGroup>

          <RibbonGroup w={251} label="Düzenleme">
            <Stack $ml={4}>
              <SmallButton $gap={6}><Sigma />Otomatik Toplam<Down /></SmallButton>
              <SmallButton $gap={5}><Fill />Dolgu<Down /></SmallButton>
              <SmallButton $gap={4}><Eraser />Temizle<Down /></SmallButton>
            </Stack>
            <Grow />
            <Big w={76} icon={<SortIcon />} lines={["Sırala ve Filtre", "Uygula"]} />
            <Big w={44} icon={<Binoculars />} lines={["Bul ve", "Seç"]} />
          </RibbonGroup>
        </Ribbon>

        <FormulaBar>
          <NamePane>
            <NameRow>
              <NameInput aria-label="Ad kutusu" defaultValue="B34" />
              <NameArrow aria-label="Adlar"><Tri d="d" c="#000" /></NameArrow>
              <FxPill><Dot /><Fx>f<small>x</small></Fx></FxPill>
            </NameRow>
          </NamePane>
          <FormulaText aria-label="Formül çubuğu" />
          <FormulaSide>
            <Expand aria-label="Genişlet"><svg width="9" height="9"><path d="M1 4l3.500-3L8 4M1 8l3.500-3L8 8" fill="none" stroke="#111" strokeWidth="1.300" /></svg></Expand>
            <Tri d="u" />
            <Grow />
            <Tri d="d" />
          </FormulaSide>
        </FormulaBar>
        <Splitter />

        <SheetArea>
          <SheetClip>
            <Grid>
              <thead>
                <tr>
                  <Corner aria-label="Tümünü seç" />
                  <ColHead $w={299}>A</ColHead>
                  <ColHead $on>B</ColHead>
                </tr>
              </thead>
              <tbody>
                <Row $h={21}>
                  <RowHead>1</RowHead>
                  <IdCell $head>ID NUMARALARINI YAPIŞTIR</IdCell>
                  <WideCell $tone="head">BU ALANI KOPYALA &gt; DATABASE İZLEMEYE YAPIŞTIR</WideCell>
                </Row>
                {ids.map((id, i) => {
                  const n = i + 2;
                  const cell = wide[n];
                  return (
                    <Row key={n} $h={n < 8 ? 20 : 21}>
                      <RowHead $on={n === 34}>{n}</RowHead>
                      <IdCell>{id}</IdCell>
                      <WideCell $tone={cell?.tone} $sel={n === 34}>
                        {cell?.text}
                        {n === 34 && <Selection />}
                      </WideCell>
                    </Row>
                  );
                })}
              </tbody>
            </Grid>
          </SheetClip>
          <VScroll>
            <VSplit />
            <ScrollArrow aria-label="Yukarı kaydır"><Tri d="u" /></ScrollArrow>
            <VThumb />
            <Grow />
            <ScrollArrow aria-label="Aşağı kaydır"><Tri d="d" /></ScrollArrow>
          </VScroll>
        </SheetArea>

        <SheetBar>
          <SheetNav>
            <NavButton aria-label="İlk sayfa"><Nav bar /></NavButton>
            <NavButton aria-label="Önceki sayfa"><Nav /></NavButton>
            <NavButton aria-label="Sonraki sayfa"><Nav flip /></NavButton>
            <NavButton aria-label="Son sayfa"><Nav flip bar /></NavButton>
          </SheetNav>
          <Tabs>
            <SheetTab $w={60} $active>Sayfa1</SheetTab>
            <SheetTab $w={58}>Sayfa2</SheetTab>
            <SheetTab $w={58}>Sayfa3</SheetTab>
            <SheetTab $w={33} aria-label="Sayfa ekle">
              <svg width="15" height="12" viewBox="0 0 15 12"><path d="M5.500 2.500h9v6l-2 2h-7z" fill="#f5f9ff" stroke="#5f7299" /><path d="M3.500 0v7M0 3.500h7M1 1l5 5M6 1L1 6" stroke="#f0902a" /></svg>
            </SheetTab>
          </Tabs>
          <HScroll>
            <HSplit />
            <ScrollArrow aria-label="Sola kaydır"><Tri d="l" /></ScrollArrow>
            <HThumb><i /><i /><i /><i /></HThumb>
            <Grow />
            <ScrollArrow aria-label="Sağa kaydır"><Tri d="r" /></ScrollArrow>
            <HSplit />
          </HScroll>
        </SheetBar>

        <StatusBar>
          <Ready>Hazır</Ready>
          <ViewZone>
            <Views>
              <ViewButton $on aria-label="Normal"><svg width="13" height="10"><path d="M.5.500h12v9H.5zM4.500 0v10M8.500 0v10M0 3.500h13M0 6.500h13" fill="#fff" stroke="#5d6675" /></svg></ViewButton>
              <ViewButton aria-label="Sayfa düzeni"><svg width="13" height="12"><path d="M.5.500h12v11H.5z" fill="#9aa0ab" stroke="#5d6675" /><path d="M3.500 2h6v8h-6z" fill="#fff" /><path d="M5 4h3M5 6h3M5 8h3" stroke="#777" /></svg></ViewButton>
              <ViewButton aria-label="Sayfa sonu"><svg width="13" height="12"><path d="M.5.500h12v11H.5z" fill="#9aa0ab" stroke="#5d6675" /><path d="M2 1h3v6H2zM6 1h3v6H6z" fill="#fff" /></svg></ViewButton>
            </Views>
            <ZoomLabel>%100</ZoomLabel>
            <IconButton aria-label="Uzaklaştır"><ZoomCircle /></IconButton>
            <ZoomRange type="range" aria-label="Yakınlaştırma" min={0} max={200} defaultValue={98} />
            <IconButton aria-label="Yakınlaştır"><ZoomCircle plus /></IconButton>
          </ViewZone>
        </StatusBar>
      </Shell>
      <Orb aria-label="Office düğmesi"><Logo /></Orb>
      <Pointer><svg width="14" height="21" viewBox="0 0 14 21"><path d="M.7 1v16l3.600-3.500 2.500 6 2.500-1-2.500-5.800h5z" fill="#fff" stroke="#111" /></svg></Pointer>
    </Viewport>
  );
}
